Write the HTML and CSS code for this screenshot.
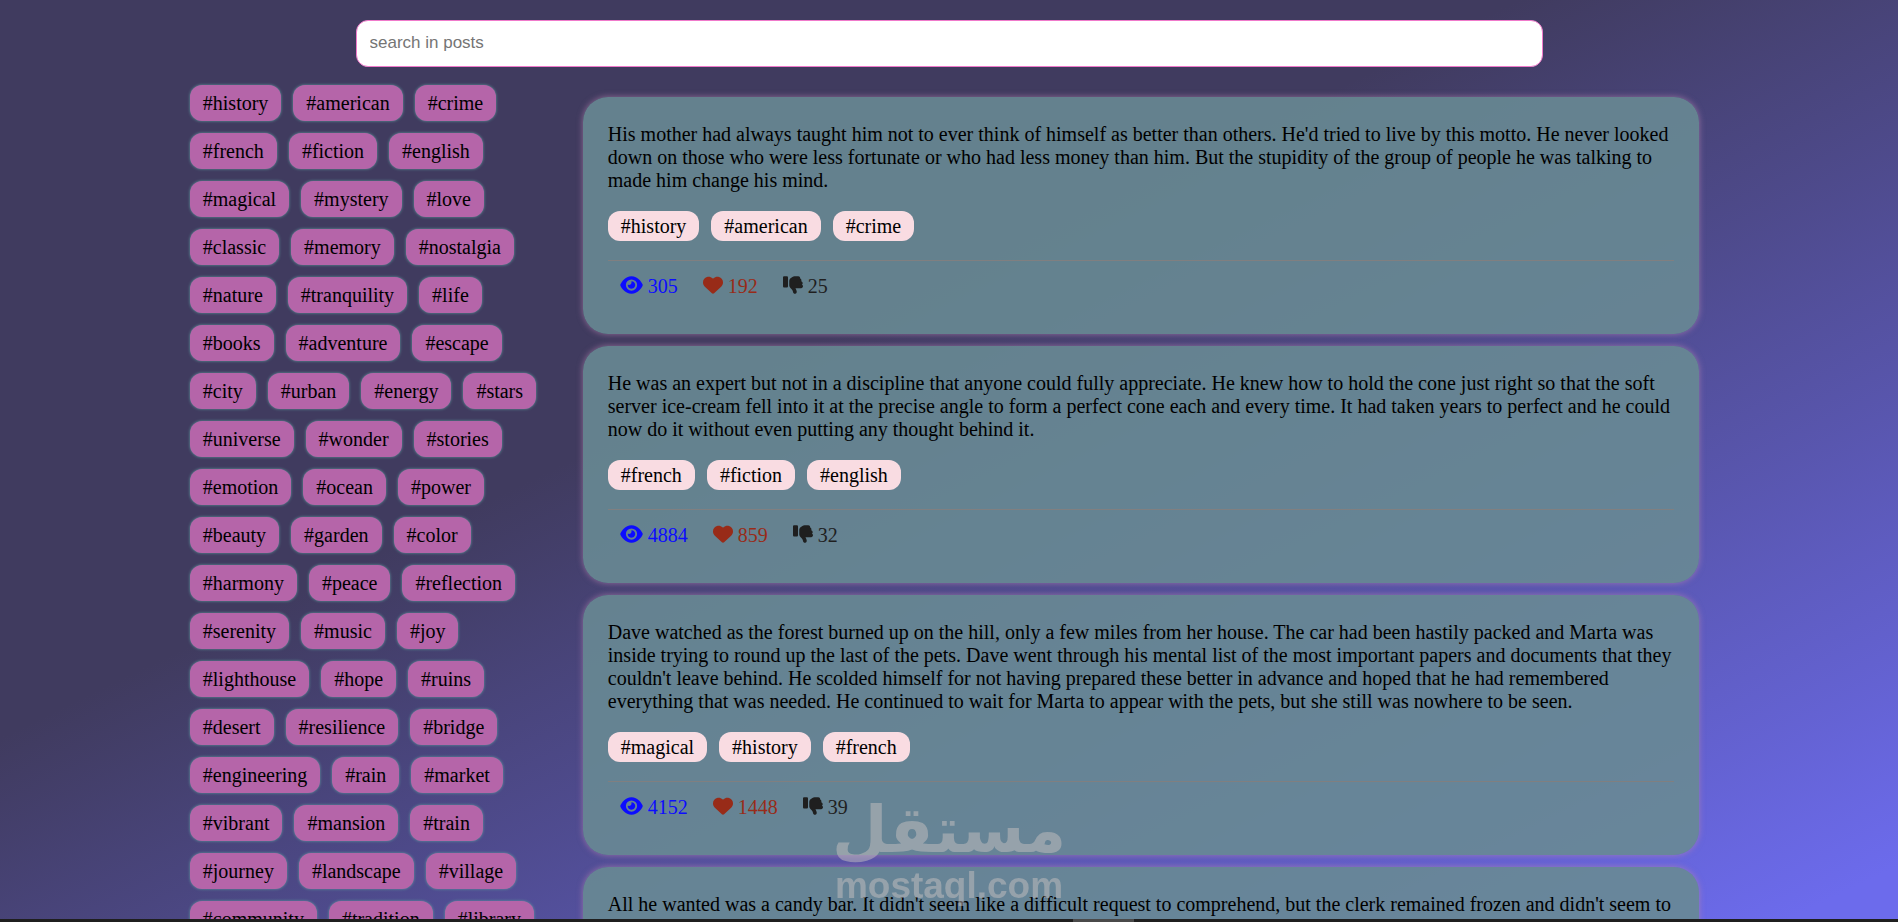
FILE: index.html
```html
<!DOCTYPE html>
<html lang="en">
<head>
  <meta charset="UTF-8" />
  <meta name="viewport" content="width=device-width, initial-scale=1.0"/>
  <title>Posts</title>
  <link rel="stylesheet" href="styles.css">
</head>
<body>

  <!-- Icon shapes used by the post stats -->
  <svg class="icon-defs" aria-hidden="true">
    <symbol id="icon-eye" viewBox="0 0 576 512"><path d="M288 32c-80.800 0-145.500 36.800-192.600 80.600C48.600 156 17.300 208 2.500 243.700c-3.300 7.900-3.300 16.700 0 24.600C17.300 304 48.600 356 95.400 399.400C142.500 443.200 207.200 480 288 480s145.500-36.800 192.600-80.600c46.800-43.500 78.100-95.400 93-131.100c3.300-7.900 3.300-16.700 0-24.600c-14.900-35.700-46.200-87.700-93-131.100C433.500 68.800 368.800 32 288 32zM144 256a144 144 0 1 1 288 0 144 144 0 1 1 -288 0zm144-64c0 35.300-28.700 64-64 64c-7.100 0-13.900-1.200-20.300-3.300c-5.500-1.800-11.900 1.600-11.700 7.400c.3 6.900 1.300 13.800 3.200 20.700c13.700 51.200 66.400 81.600 117.600 67.900s81.600-66.400 67.900-117.600c-11.100-41.500-47.800-69.400-88.600-71.100c-5.800-.2-9.200 6.100-7.400 11.700c2.100 6.400 3.300 13.200 3.300 20.300z"/></symbol>
    <symbol id="icon-heart" viewBox="0 0 512 512"><path d="M47.600 300.400L228.300 469.100c7.500 7 17.400 10.900 27.700 10.900s20.200-3.900 27.700-10.900L464.400 300.400c30.400-28.300 47.600-68 47.600-109.500v-5.800c0-69.900-50.500-129.500-119.400-141C347 36.500 300.600 51.400 268 84L256 96 244 84c-32.600-32.600-79-47.500-124.600-39.900C50.500 55.600 0 115.200 0 185.100v5.800c0 41.500 17.200 81.200 47.600 109.500z"/></symbol>
    <symbol id="icon-dislike" viewBox="0 0 512 512"><path d="M313.400 479.100c26-5.200 42.900-30.500 37.700-56.500l-2.300-11.400c-5.300-26.700-15.100-52.100-28.800-75.200H464c26.500 0 48-21.500 48-48c0-18.500-10.500-34.600-25.900-42.600C497 236.600 504 223.100 504 208c0-23.400-16.800-42.900-38.900-47.100c4.400-7.300 6.900-15.800 6.900-24.900c0-21.300-13.900-39.400-33.100-45.600c.7-3.300 1.100-6.800 1.100-10.400c0-26.500-21.500-48-48-48H294.500c-19 0-37.500 5.600-53.300 16.100L202.700 73.800C176 91.600 160 121.600 160 153.700V192v48 24.900c0 29.200 13.300 56.700 36 75l7.400 5.900c26.500 21.200 44.600 51 51.200 84.200l2.300 11.400c5.200 26 30.500 42.900 56.500 37.700zM32 320H96c17.700 0 32-14.300 32-32V64c0-17.700-14.300-32-32-32H32C14.300 32 0 46.300 0 64V288c0 17.700 14.300 32 32 32z"/></symbol>
  </svg>

  <header class="search-bar">
    <input class="search-input" type="text" placeholder="search in posts" aria-label="search in posts" />
  </header>

  <main class="container">
    <aside class="tags">
      <span class="tag">#history</span>
      <span class="tag">#american</span>
      <span class="tag">#crime</span>
      <span class="tag">#french</span>
      <span class="tag">#fiction</span>
      <span class="tag">#english</span>
      <span class="tag">#magical</span>
      <span class="tag">#mystery</span>
      <span class="tag">#love</span>
      <span class="tag">#classic</span>
      <span class="tag">#memory</span>
      <span class="tag">#nostalgia</span>
      <span class="tag">#nature</span>
      <span class="tag">#tranquility</span>
      <span class="tag">#life</span>
      <span class="tag">#books</span>
      <span class="tag">#adventure</span>
      <span class="tag">#escape</span>
      <span class="tag">#city</span>
      <span class="tag">#urban</span>
      <span class="tag">#energy</span>
      <span class="tag">#stars</span>
      <span class="tag">#universe</span>
      <span class="tag">#wonder</span>
      <span class="tag">#stories</span>
      <span class="tag">#emotion</span>
      <span class="tag">#ocean</span>
      <span class="tag">#power</span>
      <span class="tag">#beauty</span>
      <span class="tag">#garden</span>
      <span class="tag">#color</span>
      <span class="tag">#harmony</span>
      <span class="tag">#peace</span>
      <span class="tag">#reflection</span>
      <span class="tag">#serenity</span>
      <span class="tag">#music</span>
      <span class="tag">#joy</span>
      <span class="tag">#lighthouse</span>
      <span class="tag">#hope</span>
      <span class="tag">#ruins</span>
      <span class="tag">#desert</span>
      <span class="tag">#resilience</span>
      <span class="tag">#bridge</span>
      <span class="tag">#engineering</span>
      <span class="tag">#rain</span>
      <span class="tag">#market</span>
      <span class="tag">#vibrant</span>
      <span class="tag">#mansion</span>
      <span class="tag">#train</span>
      <span class="tag">#journey</span>
      <span class="tag">#landscape</span>
      <span class="tag">#village</span>
      <span class="tag">#community</span>
      <span class="tag">#tradition</span>
      <span class="tag">#library</span>
    </aside>

    <section class="posts">
      <article class="post">
        <p class="post-body">His mother had always taught him not to ever think of himself as better than others. He'd tried to live by this motto. He never looked down on those who were less fortunate or who had less money than him. But the stupidity of the group of people he was talking to made him change his mind.</p>
        <div class="post-tags">
          <span class="post-tag">#history</span>
          <span class="post-tag">#american</span>
          <span class="post-tag">#crime</span>
        </div>
        <hr class="divider">
        <div class="stats">
          <span class="stat views"><svg class="icon icon-wide"><use href="#icon-eye"/></svg>305</span>
          <span class="stat likes"><svg class="icon"><use href="#icon-heart"/></svg>192</span>
          <span class="stat dislikes"><svg class="icon"><use href="#icon-dislike"/></svg>25</span>
        </div>
      </article>

      <article class="post">
        <p class="post-body">He was an expert but not in a discipline that anyone could fully appreciate. He knew how to hold the cone just right so that the soft server ice-cream fell into it at the precise angle to form a perfect cone each and every time. It had taken years to perfect and he could now do it without even putting any thought behind it.</p>
        <div class="post-tags">
          <span class="post-tag">#french</span>
          <span class="post-tag">#fiction</span>
          <span class="post-tag">#english</span>
        </div>
        <hr class="divider">
        <div class="stats">
          <span class="stat views"><svg class="icon icon-wide"><use href="#icon-eye"/></svg>4884</span>
          <span class="stat likes"><svg class="icon"><use href="#icon-heart"/></svg>859</span>
          <span class="stat dislikes"><svg class="icon"><use href="#icon-dislike"/></svg>32</span>
        </div>
      </article>

      <article class="post">
        <p class="post-body">Dave watched as the forest burned up on the hill, only a few miles from her house. The car had been hastily packed and Marta was inside trying to round up the last of the pets. Dave went through his mental list of the most important papers and documents that they couldn't leave behind. He scolded himself for not having prepared these better in advance and hoped that he had remembered everything that was needed. He continued to wait for Marta to appear with the pets, but she still was nowhere to be seen.</p>
        <div class="post-tags">
          <span class="post-tag">#magical</span>
          <span class="post-tag">#history</span>
          <span class="post-tag">#french</span>
        </div>
        <hr class="divider">
        <div class="stats">
          <span class="stat views"><svg class="icon icon-wide"><use href="#icon-eye"/></svg>4152</span>
          <span class="stat likes"><svg class="icon"><use href="#icon-heart"/></svg>1448</span>
          <span class="stat dislikes"><svg class="icon"><use href="#icon-dislike"/></svg>39</span>
        </div>
      </article>

      <article class="post">
        <p class="post-body">All he wanted was a candy bar. It didn't seem like a difficult request to comprehend, but the clerk remained frozen and didn't seem to</p>
      </article>
    </section>
  </main>

  <div class="watermark">
    <span class="watermark-name" lang="ar" dir="rtl">مستقل</span>
    <span class="watermark-site">mostaql.com</span>
  </div>

  <div class="bottom-bar"><span class="bottom-handle"></span></div>

</body>
</html>
```
FILE: styles.css
```css
* {
  box-sizing: border-box;
}

body {
  margin: 0;
  height: 100vh;
  overflow: hidden;
  font-family: "Liberation Serif", "Times New Roman", serif;
  font-size: 20px;
  line-height: 23px;
  color: #000;
  background: linear-gradient(to bottom right, #403b5f 40%, #6c6bec 97%);
}

.icon-defs {
  display: none;
}

/* Search */
.search-bar {
  display: flex;
  justify-content: center;
  padding: 20px 0 18px;
}

.search-input {
  width: 1187px;
  max-width: 90%;
  height: 47px;
  padding: 0 13px 2px;
  border: 1px solid #f07acb;
  border-radius: 12px;
  background: #fff;
  font-family: "Liberation Sans", Arial, sans-serif;
  font-size: 17px;
  outline: none;
}

.search-input::placeholder {
  color: #757575;
}

.container {
  display: flex;
  align-items: flex-start;
  width: 80%;
  margin: 0 auto;
  padding-right: 9px;
}

/* Tags column */
.tags {
  flex: 0 0 370px;
  display: flex;
  flex-wrap: wrap;
  gap: 12px;
  margin-right: 23px;
}

.tag {
  padding: 7px 13px 6px;
  border-radius: 12px;
  background: #b565a9;
  box-shadow: 0 0 3px cadetblue;
}

/* Posts */
.posts {
  flex: 1;
  display: flex;
  flex-direction: column;
  gap: 12px;
  padding-top: 12px;
}

.post {
  padding: 26px 25px 25px;
  border-radius: 25px;
  background: rgba(104, 138, 147, 0.9);
  box-shadow: 0 0 6px rgba(181, 130, 175, 0.7);
}

.post-body {
  margin: 0 0 19px;
}

.post-tags {
  display: flex;
  gap: 12px;
}

.post-tag {
  padding: 4px 13px 3px;
  border-radius: 12px;
  background: #f9dce2;
}

.divider {
  height: 1px;
  margin: 19px 0 14px;
  border: 0;
  background: #807f80;
}

.stats {
  display: flex;
  gap: 25px;
  padding: 0 12px 11px;
}

.stat {
  display: flex;
  gap: 5px;
}

.icon {
  width: 20px;
  height: 20px;
  fill: currentColor;
}

.icon-wide {
  width: 23px;
}

.views {
  color: #0c0cff;
}

.likes {
  color: #982b18;
}

.dislikes {
  color: #1f1f1f;
}

/* Watermark over the page */
.watermark {
  position: fixed;
  bottom: 16px;
  left: 50%;
  transform: translateX(-50%);
  display: flex;
  flex-direction: column;
  align-items: center;
  color: #c5c0c0;
  opacity: 0.5;
  font-weight: bold;
  pointer-events: none;
}

.watermark-name {
  font-family: "DejaVu Sans", sans-serif;
  font-size: 64px;
  line-height: 72px;
}

.watermark-site {
  font-family: "Liberation Sans", Arial, sans-serif;
  font-size: 37px;
  line-height: 40px;
}

.bottom-bar {
  position: fixed;
  right: 0;
  bottom: 0;
  left: 0;
  display: flex;
  justify-content: center;
  height: 3px;
  background: #1f1f1f;
}

.bottom-handle {
  width: 61px;
  margin-left: 309px;
  background: #4a4a4a;
}
```
